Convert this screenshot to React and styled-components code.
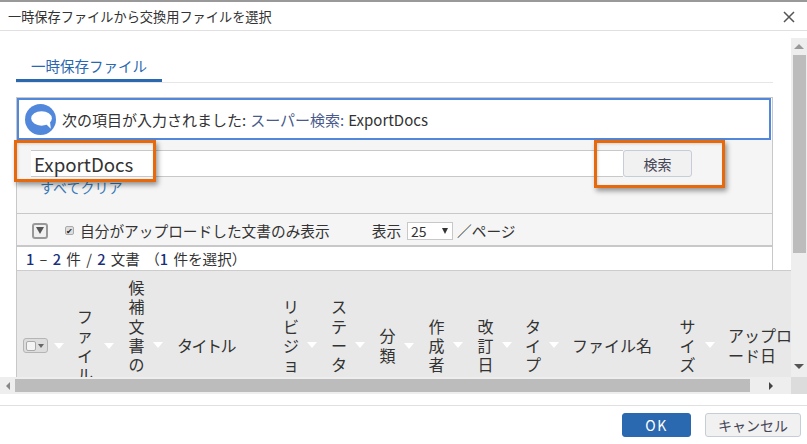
import React from 'react';
import styled, { createGlobalStyle } from 'styled-components';

const GlobalStyle = createGlobalStyle`
  html, body {
    margin: 0;
    padding: 0;
    background: #fff;
    overflow: hidden;
  }
  body {
    font-family: "Noto Sans CJK JP", "Noto Sans", sans-serif;
    color: #333;
  }
`;

const Dialog = styled.div`
  position: relative;
  display: flex;
  flex-direction: column;
  width: 807px;
  height: 444px;
  overflow: hidden;
  border-top: 2px solid #999;
  box-sizing: border-box;
`;

const TitleBar = styled.div`
  display: flex;
  align-items: center;
  justify-content: space-between;
  flex: none;
  height: 28px;
  padding: 0 12px 0 8px;
  border-bottom: 1px solid #e0e0e0;
  font-size: 13.2px;
  color: #333;
`;

const CloseIcon = styled.svg`
  width: 12px;
  height: 12px;
  margin-top: 2px;
`;

const Middle = styled.div`
  display: flex;
  flex: none;
  height: 346px;
`;

const ScrollArea = styled.div`
  flex: 1;
  min-width: 0;
  overflow: hidden;
  padding: 23px 0 0 16px;
`;

const TabBar = styled.div`
  width: 757px;
  height: 28px;
  border-bottom: 1px solid #e6e6e6;
  margin-bottom: 14px;
`;

const Tab = styled.div`
  box-sizing: border-box;
  width: 146px;
  height: 28px;
  padding: 2px 0 0 15px;
  border-bottom: 3px solid #2a68b0;
  font-size: 14.5px;
  line-height: 20px;
  color: #2a68b0;
`;

const Panel = styled.div`
  box-sizing: border-box;
  width: 757px;
  border: 1px solid #c8c8c8;
  border-bottom: 0;
`;

const Alert = styled.div`
  display: flex;
  align-items: center;
  box-sizing: border-box;
  height: 42px;
  margin-right: 1px;
  padding-left: 6px;
  border: 2px solid #5288dc;
  font-size: 15px;
  gap: 6px;
`;

const AlertLabel = styled.span`
  color: ${(p) => p.$color || '#333'};
  margin-right: ${(p) => p.$gap || 0}px;
`;

const SearchSection = styled.div`
  box-sizing: border-box;
  height: 74px;
  padding: 10px 0 0 14px;
  background: #f5f5f5;
  border-bottom: 1px solid #c8c8c8;
`;

const SearchRow = styled.div`
  display: flex;
  height: 27px;
`;

const SearchInput = styled.div`
  box-sizing: border-box;
  width: 592px;
  height: 27px;
  padding-left: 3px;
  background: #fff;
  border-top: 1px solid #c8c8c8;
  border-bottom: 1px solid #c8c8c8;
  font-size: 18.7px;
  line-height: 25px;
  color: #333;
`;

const Button = styled.div`
  display: flex;
  align-items: center;
  justify-content: center;
  box-sizing: border-box;
  width: ${(p) => p.$w}px;
  height: ${(p) => p.$h}px;
  background: ${(p) => (p.$primary ? '#2a68b0' : '#f1f1f1')};
  border: 1px solid ${(p) => (p.$primary ? '#2a68b0' : '#c5cdd8')};
  border-radius: 3px;
  color: ${(p) => (p.$primary ? '#fff' : '#445')};
  font-size: ${(p) => p.$size || 14}px;
  letter-spacing: ${(p) => p.$spacing || 0}px;
`;

const ClearLink = styled.div`
  margin: 1px 0 0 9px;
  font-size: 14px;
  line-height: 18px;
  color: #3a7ab8;
`;

const Toolbar = styled.div`
  display: flex;
  align-items: center;
  box-sizing: border-box;
  height: 33px;
  padding: 2px 0 0 15px;
  background: #f5f5f5;
  border-bottom: 2px solid #c8c8c8;
  font-size: 14.7px;
`;

const FilterButton = styled.div`
  display: flex;
  align-items: center;
  justify-content: center;
  box-sizing: border-box;
  width: 16px;
  height: 16px;
  margin-right: 17px;
  background: #f0f0f0;
  border: 2px solid #999;
  border-radius: 3px;
`;

const Triangle = styled.span`
  flex: none;
  width: 0;
  height: 0;
  border-left: ${(p) => p.$w / 2}px solid transparent;
  border-right: ${(p) => p.$w / 2}px solid transparent;
  border-top: ${(p) => p.$h}px solid ${(p) => p.$color};
`;

const TinyCheck = styled.div`
  display: flex;
  align-items: center;
  justify-content: center;
  box-sizing: border-box;
  width: 9px;
  height: 9px;
  margin-right: 6px;
  background: #ddd;
  border: 1px solid #aaa;
  border-radius: 2px;
  font-size: 8px;
  line-height: 1;
  color: #222;
`;

const PageLabel = styled.span`
  margin-left: ${(p) => p.$left || 0}px;
`;

const PageSelect = styled.div`
  display: flex;
  align-items: center;
  justify-content: space-between;
  box-sizing: border-box;
  width: 46px;
  height: 18px;
  margin: 0 4px 0 6px;
  padding: 0 4px 0 3px;
  background: #fff;
  border: 1px solid #c8c8c8;
  font-size: 14px;
`;

const ResultRow = styled.div`
  box-sizing: border-box;
  height: 23px;
  padding-left: 9px;
  background: #fff;
  font-size: 14.6px;
  line-height: 23px;
  word-spacing: 2px;
  white-space: pre;
`;

const Num = styled.b`
  color: #1a2f7c;
  font-weight: 500;
`;

const HeaderRow = styled.div`
  display: flex;
  align-items: center;
  box-sizing: border-box;
  width: 800px;
  height: 150px;
  margin-left: 0;
  padding-left: 6px;
  background: #e8e8e8;
  border-top: 1px solid #ccc;
  border-left: 1px solid #c8c8c8;
  font-size: 16px;
  line-height: 19.3px;
  color: #333;
`;

const HeaderCell = styled.div`
  display: flex;
  align-items: center;
  flex: none;
  gap: ${(p) => p.$gap || 8}px;
  width: ${(p) => p.$w}px;
`;

const HeaderLabel = styled.div`
  flex: none;
  width: ${(p) => p.$w}px;
  word-break: break-all;
  text-align: ${(p) => (p.$left ? 'left' : 'center')};
  letter-spacing: ${(p) => p.$tight || 0}px;
`;

const HeaderCheck = styled.div`
  display: flex;
  align-items: center;
  justify-content: space-between;
  box-sizing: border-box;
  width: 25px;
  height: 15px;
  padding: 0 3px 0 2px;
  background: #ddd;
  border: 1px solid #b5b5b5;
  border-radius: 3px;
`;

const HeaderCheckBox = styled.span`
  box-sizing: border-box;
  width: 10px;
  height: 10px;
  background: #f4f4f4;
  border: 1px solid #aaa;
  border-radius: 2px;
`;

const VScroll = styled.div`
  display: flex;
  flex-direction: column;
  flex: none;
  box-sizing: border-box;
  width: 16px;
  margin-top: 7px;
  background: #eee;
`;

const ScrollButton = styled.div`
  display: flex;
  align-items: center;
  justify-content: center;
  flex: none;
  height: ${(p) => p.$size}px;
  width: ${(p) => (p.$horizontal ? `${p.$size}px` : 'auto')};
`;

const VThumb = styled.div`
  flex: none;
  height: 198px;
  margin: 0 1px 0 2px;
  background: #bcbcbc;
`;

const Spacer = styled.div`
  flex: 1;
`;

const UpTriangle = styled.span`
  width: 0;
  height: 0;
  border-left: 5px solid transparent;
  border-right: 5px solid transparent;
  border-bottom: 5px solid #999;
`;

const SideTriangle = styled.span`
  width: 0;
  height: 0;
  border-top: 4px solid transparent;
  border-bottom: 4px solid transparent;
  ${(p) => (p.$left ? 'border-right: 4px solid #888;' : 'border-left: 4px solid #444;')}
`;

const HScroll = styled.div`
  display: flex;
  align-items: center;
  flex: none;
  height: 17px;
  background: #eee;
`;

const HThumb = styled.div`
  flex: none;
  width: 735px;
  height: 13px;
  background: #bcbcbc;
`;

const ScrollCorner = styled.div`
  flex: none;
  width: 16px;
  height: 17px;
  background: #dcdcdc;
`;

const Footer = styled.div`
  display: flex;
  justify-content: flex-end;
  flex: none;
  gap: 14px;
  margin-top: 11px;
  padding: 7px 6px 0 0;
  border-top: 1px solid #e0e0e0;
`;

const Callout = styled.div`
  position: absolute;
  box-sizing: border-box;
  left: ${(p) => p.$x}px;
  top: ${(p) => p.$y}px;
  width: ${(p) => p.$w}px;
  height: ${(p) => p.$h}px;
  border: 3px solid #e8680c;
  box-shadow: 2px 3px 5px rgba(0, 0, 0, 0.4), inset 1px 1px 3px rgba(0, 0, 0, 0.15);
`;

const columns = [
  { w: 51, label: 'ファイル', lw: 16, arrow: true, gap: 11 },
  { w: 49, label: '候補文書の承認', lw: 17, arrow: true },
  { w: 106, label: 'タイトル', lw: 66, left: true, tight: -1.5 },
  { w: 48, label: 'リビジョン', lw: 16, arrow: true },
  { w: 48, label: 'ステータス', lw: 16, arrow: true },
  { w: 49, label: '分類', lw: 17, arrow: true },
  { w: 49, label: '作成者', lw: 17, arrow: true },
  { w: 48, label: '改訂日', lw: 17, arrow: true },
  { w: 47, label: 'タイプ', lw: 16, arrow: true },
  { w: 107, label: 'ファイル名', lw: 82, left: true },
  { w: 49, label: 'サイズ', lw: 17, arrow: true, gap: 9 },
  { w: 64, label: 'アップロード日', lw: 64, left: true },
];

const App = () => (
  <>
    <GlobalStyle />
    <Dialog>
      <TitleBar>
        一時保存ファイルから交換用ファイルを選択
        <CloseIcon viewBox="0 0 12 12">
          <path d="M1 1L11 11M11 1L1 11" stroke="#555" strokeWidth="1.5" fill="none" />
        </CloseIcon>
      </TitleBar>
      <Middle>
        <ScrollArea>
          <TabBar>
            <Tab>一時保存ファイル</Tab>
          </TabBar>
          <Panel>
            <Alert>
              <svg width="31" height="31" viewBox="0 0 30 30">
                <circle cx="15" cy="15" r="15" fill="#5288dc" />
                <ellipse cx="16" cy="14" rx="10" ry="7" fill="#fff" />
                <path d="M20 19L25 24L24 16Z" fill="#fff" />
              </svg>
              <span>
                <AlertLabel $gap={4}>次の項目が入力されました:</AlertLabel>
                <AlertLabel $color="#4a5a8c" $gap={4}>スーパー検索:</AlertLabel>
                <AlertLabel>ExportDocs</AlertLabel>
              </span>
            </Alert>
            <SearchSection>
              <SearchRow>
                <SearchInput>ExportDocs</SearchInput>
                <Button $w={69} $h={27}>検索</Button>
              </SearchRow>
              <ClearLink>すべてクリア</ClearLink>
            </SearchSection>
            <Toolbar>
              <FilterButton>
                <Triangle $w={8} $h={7} $color="#555" />
              </FilterButton>
              <TinyCheck>✔</TinyCheck>
              自分がアップロードした文書のみ表示
              <PageLabel $left={42}>表示</PageLabel>
              <PageSelect>
                25
                <Triangle $w={7} $h={6} $color="#333" />
              </PageSelect>
              ／ページ
            </Toolbar>
            <ResultRow>
              <Num>1</Num> – <Num>2</Num> 件 / <Num>2</Num> 文書 （<Num>1</Num> 件を選択）
            </ResultRow>
          </Panel>
          <HeaderRow>
            <HeaderCell $w={54} $gap={6}>
              <HeaderCheck>
                <HeaderCheckBox />
                <Triangle $w={6} $h={4} $color="#666" />
              </HeaderCheck>
              <Triangle $w={11} $h={6} $color="#fff" />
            </HeaderCell>
            {columns.map((col) => (
              <HeaderCell key={col.label} $w={col.w} $gap={col.gap}>
                <HeaderLabel $w={col.lw} $left={col.left} $tight={col.tight}>{col.label}</HeaderLabel>
                {col.arrow && <Triangle $w={11} $h={6} $color="#fff" />}
              </HeaderCell>
            ))}
          </HeaderRow>
        </ScrollArea>
        <VScroll>
          <ScrollButton $size={17}><UpTriangle /></ScrollButton>
          <VThumb />
          <Spacer />
          <ScrollButton $size={21}><Triangle $w={10} $h={5} $color="#555" /></ScrollButton>
        </VScroll>
      </Middle>
      <HScroll>
        <ScrollButton $size={15} $horizontal><SideTriangle $left /></ScrollButton>
        <HThumb />
        <Spacer />
        <ScrollButton $size={41} $horizontal><SideTriangle /></ScrollButton>
        <ScrollCorner />
      </HScroll>
      <Footer>
        <Button $primary $w={69} $h={24} $spacing={1.5}>OK</Button>
        <Button $w={96} $h={24}>キャンセル</Button>
      </Footer>
      <Callout $x={14} $y={138} $w={142} $h={42} />
      <Callout $x={594} $y={138} $w={131} $h={48} />
    </Dialog>
  </>
);

export default App;
